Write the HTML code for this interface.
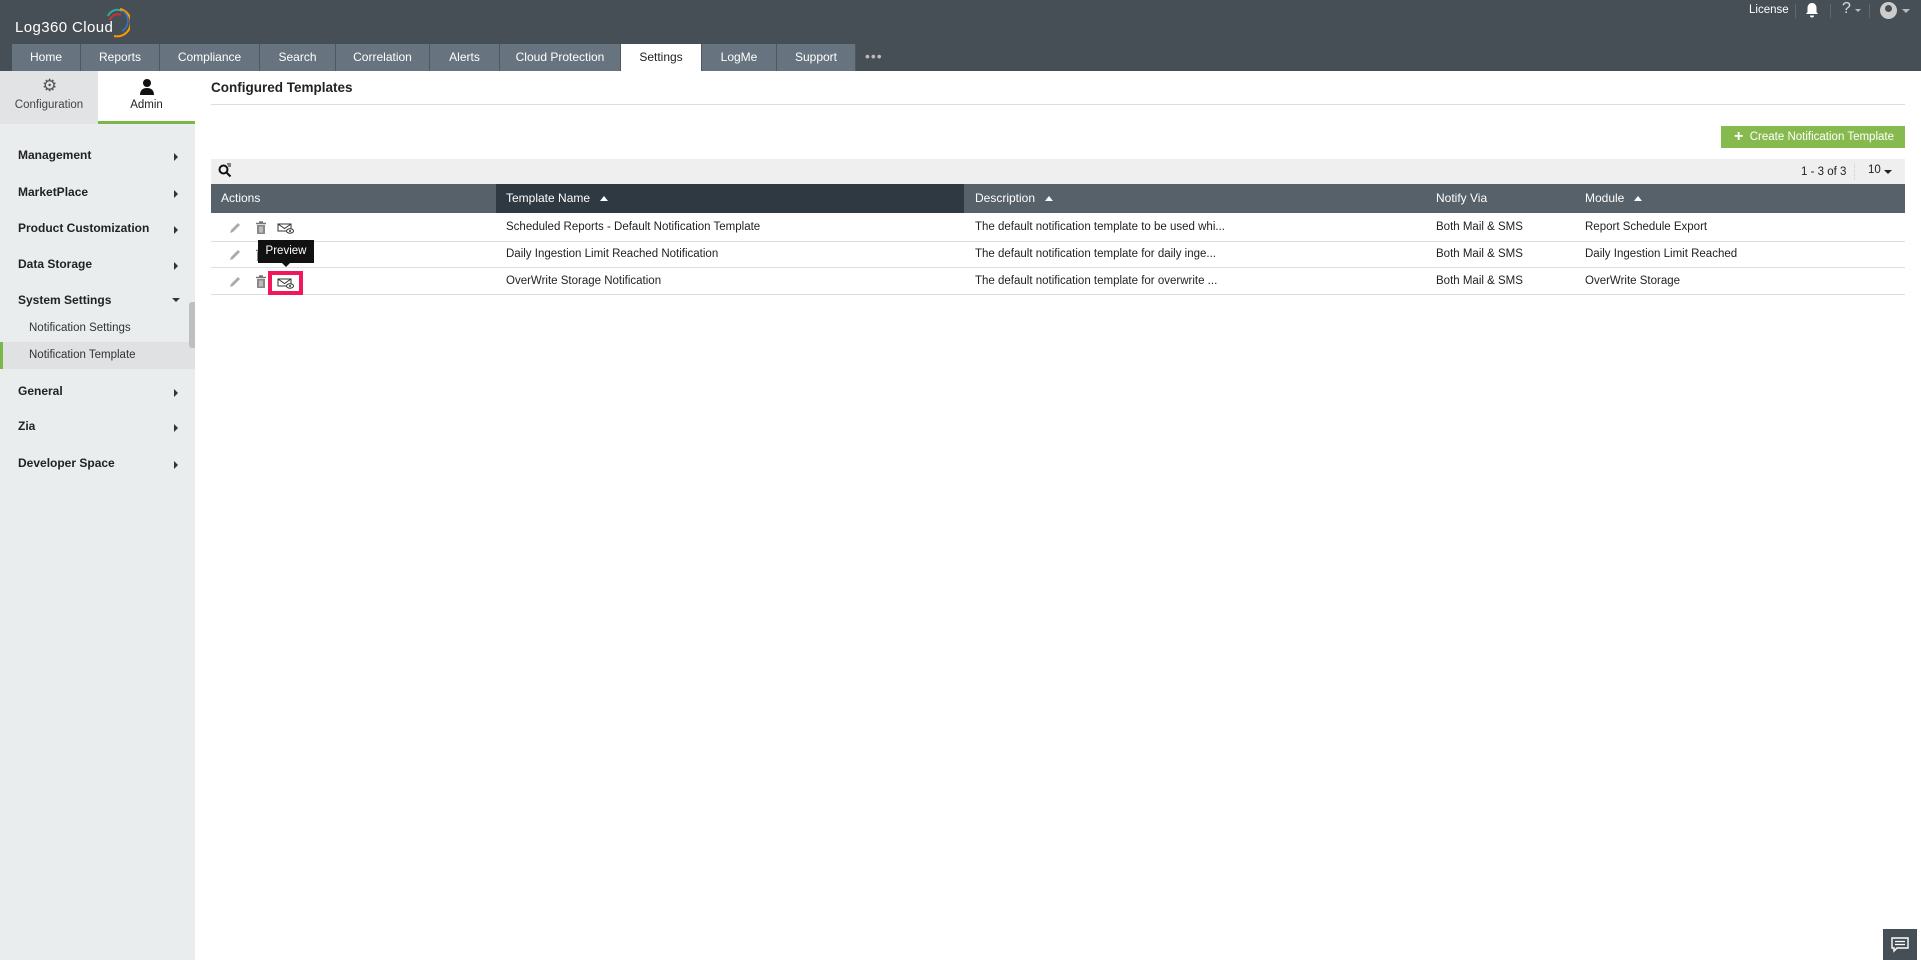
<!DOCTYPE html>
<html><head><meta charset="utf-8"><style>
*{box-sizing:border-box;margin:0;padding:0}
body{width:1921px;height:960px;overflow:hidden;font-family:"Liberation Sans",Arial,sans-serif;font-size:13px;color:#222;background:#fff;position:relative}
.abs{position:absolute}
#hdr{left:0;top:0;width:1921px;height:71px;background:#474f56}
.tab{position:absolute;top:44px;height:27px;background:#67747f;color:#fff;font-size:12px;text-align:center;line-height:27px;border-right:1px solid #4e5860}
.tab.on{background:#fff;color:#222}
#side{left:0;top:71px;width:195px;height:889px;background:#eaedee}
.mi{position:absolute;left:18px;font-weight:bold;font-size:12px;color:#222}
.arr{position:absolute;left:174px;width:0;height:0;border-top:4px solid transparent;border-bottom:4px solid transparent;border-left:4px solid #333}
.sub{position:absolute;left:29px;font-size:11.5px;color:#333}
.th{position:absolute;top:0;height:29px;line-height:29px;color:#fff;font-size:12px}
.td{position:absolute;font-size:11.5px;color:#222}
.sep{position:absolute;left:211px;width:1694px;height:1px;background:#ddd}
.up{display:inline-block;width:0;height:0;border-left:4px solid transparent;border-right:4px solid transparent;border-bottom:5px solid #fff;margin-left:10px;vertical-align:1px}
</style></head><body>
<div id="hdr" class="abs"></div>
<div class="abs" style="left:15px;top:19px;color:#fff;font-size:15px;letter-spacing:.4px">Log360 Cloud</div>
<svg class="abs" style="left:106px;top:6px" width="24" height="32" viewBox="0 0 24 32"><path d="M2 10 A10 10 0 0 1 16 5" stroke="#3a9" stroke-width="2" fill="none"/><path d="M4 14 A8 8 0 0 1 15 9" stroke="#c33" stroke-width="2" fill="none"/><path d="M14 3 A13 13 0 0 1 8 30" stroke="#f90" stroke-width="2" fill="none"/><path d="M17 5 A12 12 0 0 1 16 25" stroke="#37c" stroke-width="1.5" fill="none"/></svg>
<div class="abs" style="left:1749px;top:4px;color:#fff;font-size:11.5px">License</div>
<div class="abs" style="left:1795px;top:4px;width:1px;height:14px;background:#666"></div>
<svg class="abs" style="left:1805px;top:2px" width="14" height="16" viewBox="0 0 14 16"><path d="M7 1c-3 0-4.5 2.5-4.5 5v4L1 12h12l-1.5-2V6C11.5 3.5 10 1 7 1zM5 13.5a2 2 0 0 0 4 0z" fill="#fff"/></svg>
<div class="abs" style="left:1830px;top:4px;width:1px;height:14px;background:#666"></div>
<div class="abs" style="left:1842px;top:0;color:#ddd;font-size:16px">?</div>
<div class="abs" style="left:1855px;top:9px;border-left:3px solid transparent;border-right:3px solid transparent;border-top:3px solid #bbb"></div>
<div class="abs" style="left:1869px;top:4px;width:1px;height:14px;background:#666"></div>
<div class="abs" style="left:1880px;top:2px;width:17px;height:17px;border-radius:50%;background:#ccc"></div>
<div class="abs" style="left:1885px;top:5px;width:7px;height:7px;border-radius:50%;background:#474f56"></div>
<div class="abs" style="left:1902px;top:9px;border-left:4px solid transparent;border-right:4px solid transparent;border-top:4px solid #bbb"></div>

<div class="tab" style="left:12px;width:69px">Home</div>
<div class="tab" style="left:81px;width:79px">Reports</div>
<div class="tab" style="left:160px;width:100px">Compliance</div>
<div class="tab" style="left:260px;width:76px">Search</div>
<div class="tab" style="left:336px;width:94px">Correlation</div>
<div class="tab" style="left:430px;width:70px">Alerts</div>
<div class="tab" style="left:500px;width:121px">Cloud Protection</div>
<div class="tab on" style="left:621px;width:81px">Settings</div>
<div class="tab" style="left:702px;width:75px">LogMe</div>
<div class="tab" style="left:777px;width:79px">Support</div>
<div class="abs" style="left:865px;top:48px;color:#bbb;font-size:14px;letter-spacing:1px">•••</div>

<div id="side" class="abs"></div>
<div class="abs" style="left:0;top:71px;width:98px;height:53px;background:#e1e3e4"></div>
<div class="abs" style="left:98px;top:71px;width:97px;height:53px;background:#fff;border-bottom:3px solid #7ab648"></div>
<div class="abs" style="left:42px;top:76px;color:#555;font-size:17px">⚙</div>
<div class="abs" style="left:0;top:99px;width:98px;text-align:center;font-size:11.5px;color:#444">Configuration</div>
<svg class="abs" style="left:139px;top:78px" width="16" height="18" viewBox="0 0 16 18"><circle cx="8" cy="5" r="4" fill="#111"/><path d="M1 17c0-5 3-7 7-7s7 2 7 7z" fill="#111"/></svg>
<div class="abs" style="left:98px;top:99px;width:97px;text-align:center;font-size:11.5px;color:#222">Admin</div>

<div class="mi" style="top:148px">Management</div><div class="arr" style="top:153px"></div>
<div class="mi" style="top:185px">MarketPlace</div><div class="arr" style="top:190px"></div>
<div class="mi" style="top:221px">Product Customization</div><div class="arr" style="top:226px"></div>
<div class="mi" style="top:257px">Data Storage</div><div class="arr" style="top:262px"></div>
<div class="mi" style="top:293px">System Settings</div><div class="abs" style="left:172px;top:298px;border-left:4px solid transparent;border-right:4px solid transparent;border-top:4px solid #333"></div>
<div class="sub" style="top:322px">Notification Settings</div>
<div class="abs" style="left:0;top:342px;width:195px;height:27px;background:#dfe1e2;border-left:3px solid #7ab648"></div>
<div class="sub" style="top:349px">Notification Template</div>
<div class="abs" style="left:189px;top:302px;width:6px;height:46px;background:#bcc0c3;border-radius:3px 0 0 3px"></div>
<div class="mi" style="top:384px">General</div><div class="arr" style="top:389px"></div>
<div class="mi" style="top:419px">Zia</div><div class="arr" style="top:424px"></div>
<div class="mi" style="top:456px">Developer Space</div><div class="arr" style="top:461px"></div>

<div class="abs" style="left:211px;top:80px;font-weight:bold;font-size:13.5px;color:#222">Configured Templates</div>
<div class="abs" style="left:211px;top:104px;width:1694px;height:1px;background:#ddd"></div>

<div class="abs" style="left:1721px;top:126px;width:184px;height:22px;background:#86ba4f;color:#fff;font-size:11.5px;line-height:22px;padding-left:13px"><b style="font-size:16px;vertical-align:-1px">+</b>&nbsp;&nbsp;Create Notification Template</div>

<div class="abs" style="left:211px;top:159px;width:1694px;height:25px;background:#efefef"></div>
<svg class="abs" style="left:218px;top:163px" width="14" height="15" viewBox="0 0 14 15"><circle cx="5.5" cy="6.5" r="4" stroke="#111" stroke-width="2" fill="none"/><path d="M8.5 9.5l4 4" stroke="#111" stroke-width="2"/><path d="M9 1h4M10 3h3" stroke="#111"/></svg>
<div class="abs" style="left:1801px;top:166px;font-size:11.5px">1 - 3 of 3</div>
<div class="abs" style="left:1854px;top:163px;width:1px;height:17px;border-left:1px dotted #ccc"></div>
<div class="abs" style="left:1868px;top:164px;font-size:11.5px">10</div>
<div class="abs" style="left:1884px;top:170px;border-left:4px solid transparent;border-right:4px solid transparent;border-top:4px solid #222"></div>

<div class="abs" style="left:211px;top:184px;width:1694px;height:29px;background:#56616a">
<div class="th" style="left:10px">Actions</div>
<div class="abs" style="left:285px;top:0;width:468px;height:29px;background:#2f3941"></div>
<div class="th" style="left:295px">Template Name<span class="up"></span></div>
<div class="th" style="left:764px">Description<span class="up"></span></div>
<div class="th" style="left:1225px">Notify Via</div>
<div class="th" style="left:1374px">Module<span class="up"></span></div>
</div>

<div class="sep" style="top:241px"></div>
<div class="sep" style="top:267px"></div>
<div class="sep" style="top:294px"></div>

<svg width="0" height="0" style="position:absolute"><defs>
<g id="pen"><path d="M2 12l1-3 7-7 2 2-7 7z" fill="#aaa"/></g>
<g id="bin"><path d="M1 2.5h10M4 1h4" stroke="#777" stroke-width="1.4"/><path d="M2 4h8v9H2z" fill="#888"/><path d="M5 5.5v6M7 5.5v6" stroke="#eee"/></g>
<g id="mail"><path d="M1 3h13v7H1zM1 3l6.5 4.5L14 3" stroke="#333" fill="none"/><ellipse cx="13" cy="10" rx="3.5" ry="2.2" fill="#fff" stroke="#333"/><circle cx="13" cy="10" r="1" fill="#333"/></g>
</defs></svg>
<svg class="abs" style="left:228px;top:221px" width="14" height="14"><use href="#pen"/></svg>
<svg class="abs" style="left:255px;top:221px" width="12" height="14"><use href="#bin"/></svg>
<svg class="abs" style="left:277px;top:221px" width="18" height="14"><use href="#mail"/></svg>
<svg class="abs" style="left:228px;top:248px" width="14" height="14"><use href="#pen"/></svg>
<svg class="abs" style="left:255px;top:248px" width="12" height="14"><use href="#bin"/></svg>
<svg class="abs" style="left:228px;top:275px" width="14" height="14"><use href="#pen"/></svg>
<svg class="abs" style="left:255px;top:275px" width="12" height="14"><use href="#bin"/></svg>
<div class="abs" style="left:268px;top:271px;width:35px;height:24px;border:4px solid #f0185a;background:#fff"></div>
<svg class="abs" style="left:277px;top:276px" width="18" height="14"><use href="#mail"/></svg>
<div class="abs" style="left:258px;top:240px;width:56px;height:23px;background:#111;color:#fff;font-size:11.5px;line-height:23px;text-align:center">Preview</div>
<div class="abs" style="left:282px;top:263px;border-left:4px solid transparent;border-right:4px solid transparent;border-top:4px solid #111"></div>

<div class="td" style="left:506px;top:221px">Scheduled Reports - Default Notification Template</div>
<div class="td" style="left:975px;top:221px">The default notification template to be used whi...</div>
<div class="td" style="left:1436px;top:221px">Both Mail &amp; SMS</div>
<div class="td" style="left:1585px;top:221px">Report Schedule Export</div>
<div class="td" style="left:506px;top:248px">Daily Ingestion Limit Reached Notification</div>
<div class="td" style="left:975px;top:248px">The default notification template for daily inge...</div>
<div class="td" style="left:1436px;top:248px">Both Mail &amp; SMS</div>
<div class="td" style="left:1585px;top:248px">Daily Ingestion Limit Reached</div>
<div class="td" style="left:506px;top:275px">OverWrite Storage Notification</div>
<div class="td" style="left:975px;top:275px">The default notification template for overwrite ...</div>
<div class="td" style="left:1436px;top:275px">Both Mail &amp; SMS</div>
<div class="td" style="left:1585px;top:275px">OverWrite Storage</div>

<div class="abs" style="left:1883px;top:929px;width:34px;height:31px;background:#474f56"></div>
<svg class="abs" style="left:1891px;top:937px" width="18" height="16" viewBox="0 0 18 16"><path d="M1 1h16v10H6l-3 3v-3H1z" stroke="#fff" stroke-width="1.4" fill="none"/><path d="M4 4.5h10M4 7.5h10" stroke="#fff" stroke-width="1.2"/></svg>
</body></html>
